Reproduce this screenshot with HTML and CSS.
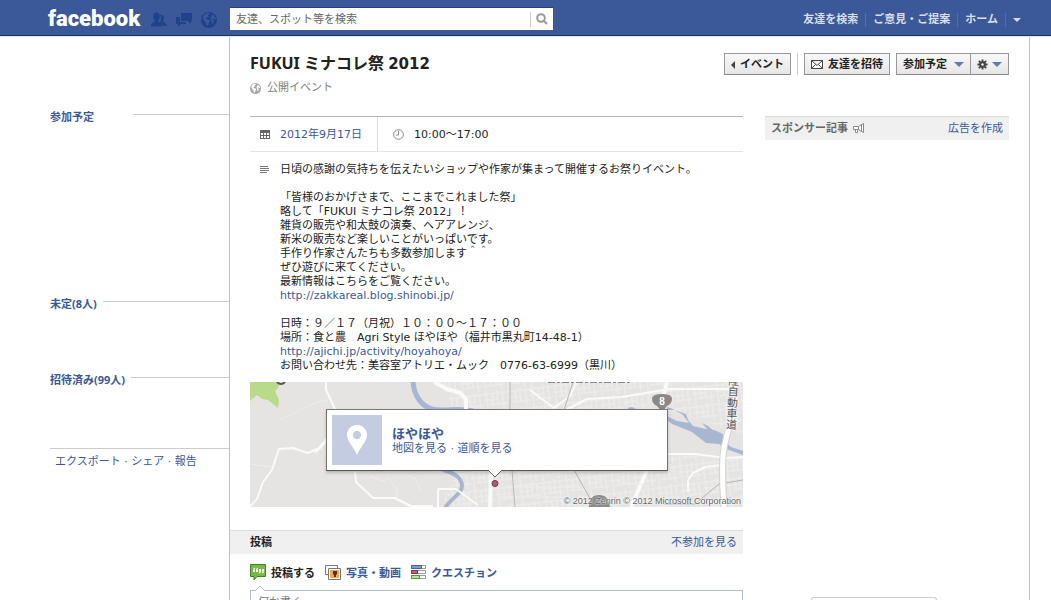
FILE: index.html
```html
<!DOCTYPE html>
<html lang="ja">
<head>
<meta charset="utf-8">
<meta name="viewport" content="width=device-width, initial-scale=1">
<title>FUKUI ミナコレ祭 2012</title>
<link rel="stylesheet" href="styles.css">
</head>
<body>
<header class="topbar">
  <a class="logo" href="#">facebook</a>
  <nav class="jewels" aria-label="通知">
    <button class="jewel" type="button" aria-label="友達リクエスト">
      <svg width="16" height="16" viewBox="0 0 16 16"><path d="M9 3c2-1 4 .3 4 2.600 0 1.500-.5 2.500-1.200 3.400.2 1.500 3.700 1.400 4.200 5h-4.500C11 11.800 9.500 11 9 10.500 10.300 8 10.500 5 9 3z"/><path d="M5.600.6c2 0 3.200 1.500 3.200 3.700C8.800 6 8.100 7.600 7.300 8.500c0 .5 0 1 .3 1.300 1.400.8 3 1.300 3.300 4.700H0c.2-3.400 2-3.900 3.400-4.700.4-.3.400-.8.3-1.300-.8-.9-1.400-2.500-1.400-4.200 0-2.200 1.300-3.700 3.300-3.700z"/></svg>
    </button>
    <button class="jewel" type="button" aria-label="メッセージ">
      <svg width="16" height="16" viewBox="0 0 16 16"><path d="M5 1h11v8h-1v3l-3-3H5z"/><path d="M0 5h4v5h6v2H5l-3 3v-3H0z"/></svg>
    </button>
    <button class="jewel" type="button" aria-label="お知らせ">
      <svg width="16" height="16" viewBox="0 0 16 16"><circle cx="8" cy="8" r="8"/><path class="land" d="M2.500 3.500 5 1.500l3-.5 1 1-2 1 .5 1.500-2 1-.5 1.500 3 1 1 1.500-1.500 2L7 14l-1.500-1-.5-2.500L3.500 9 2 6.500zM11 3l2 .5L15 7l-1 .5-2-1.500-1 1.500 2 1-1 3-1 .5-.5-3L9.500 7z"/></svg>
    </button>
  </nav>
  <form class="search" role="search">
    <input class="search-input" type="text" placeholder="友達、スポット等を検索" aria-label="友達、スポット等を検索">
    <button class="search-button" type="button" aria-label="検索">
      <svg width="12" height="12" viewBox="0 0 12 12"><circle cx="5" cy="5" r="3.800"/><path d="m8 8 3 3"/></svg>
    </button>
  </form>
  <nav class="account" aria-label="アカウント">
    <a href="#">友達を検索</a>
    <a href="#">ご意見・ご提案</a>
    <a href="#">ホーム</a>
    <button class="account-menu" type="button" aria-label="メニュー"><span class="caret"></span></button>
  </nav>
</header>

<div class="page">
  <aside class="guests">
    <section class="guest-group going"><h2><a href="#">参加予定</a></h2></section>
    <section class="guest-group"><h2><a href="#">未定(8人)</a></h2></section>
    <section class="guest-group"><h2><a href="#">招待済み(99人)</a></h2></section>
    <p class="event-links"><a href="#">エクスポート</a> · <a href="#">シェア</a> · <a href="#">報告</a></p>
  </aside>

  <main class="event">
    <div class="event-header">
      <div>
        <h1>FUKUI ミナコレ祭 <span class="year">2012</span></h1>
        <p class="privacy">
          <svg width="11" height="11" viewBox="0 0 16 16"><circle cx="8" cy="8" r="8" fill="#a8a8a8"/><path fill="#fff" d="M2.500 3.500 5 1.500l3-.5 1 1-2 1 .5 1.500-2 1-.5 1.500 3 1 1 1.500-1.500 2L7 14l-1.500-1-.5-2.500L3.500 9 2 6.500zM11 3l2 .5L15 7l-1 .5-2-1.500-1 1.500 2 1-1 3-1 .5-.5-3L9.500 7z"/></svg>
          公開イベント
        </p>
      </div>
      <div class="actions">
        <button class="button" type="button"><span class="back-arrow"></span>イベント</button>
        <span class="actions-divider"></span>
        <button class="button" type="button"><svg width="12" height="9" viewBox="0 0 12 9" fill="#fff" stroke="#444"><path d="M.5.500h11v8H.5zM.5.500 6 5.500l5.500-5M.5 8.500l4-4M11.500 8.500l-4-4"/></svg>友達を招待</button>
        <div class="button-group">
          <button class="button" type="button">参加予定<span class="caret blue"></span></button>
          <button class="button gear" type="button" aria-label="設定"><svg width="11" height="11" viewBox="0 0 12 12" stroke="#444" stroke-width="2"><path d="M6 .5v11M.5 6h11M2 2l8 8M10 2l-8 8"/><circle cx="6" cy="6" r="2.500" fill="#444"/><circle cx="6" cy="6" r="1.300" fill="#fff" stroke="none"/></svg><span class="caret blue"></span></button>
        </div>
      </div>
    </div>

    <div class="columns">
      <div class="details">
        <div class="when">
          <div class="when-item date">
            <svg width="10" height="9" viewBox="0 0 10 9"><path fill="#666" d="M0 0h10v9H0z"/><path fill="#fff" d="M1 3h2v2H1zM4 3h2v2H4zM7 3h2v2H7zM1 6h2v2H1zM4 6h2v2H4zM7 6h2v2H7z"/></svg>
            <a href="#">2012年9月17日</a>
          </div>
          <div class="when-item">
            <svg width="11" height="11" viewBox="0 0 11 11" fill="none" stroke="#888"><circle cx="5.500" cy="5.500" r="4.800"/><path d="M5.500 2v4H3"/></svg>
            <span>10:00〜17:00</span>
          </div>
        </div>
        <div class="about">
          <svg width="9" height="8" viewBox="0 0 9 8" stroke="#777"><path d="M0 .5h8M0 2.500h9M0 4.500h9M0 6.500h7"/></svg>
          <div class="description">
            <p>日頃の感謝の気持ちを伝えたいショップや作家が集まって開催するお祭りイベント。</p>
            <p>「皆様のおかげさまで、ここまでこれました祭」<br>略して「FUKUI ミナコレ祭 2012」！<br>雑貨の販売や和太鼓の演奏、ヘアアレンジ、<br>新米の販売など楽しいことがいっぱいです。<br>手作り作家さんたちも多数参加します＾＾<br>ぜひ遊びに来てください。<br>最新情報はこちらをご覧ください。<br><a href="#">http://zakkareal.blog.shinobi.jp/</a></p>
            <p>日時：９／１７（月祝）１０：００〜１７：００<br>場所：食と農　Agri Style ほやほや（福井市黒丸町14-48-1）<br><a href="#">http://ajichi.jp/activity/hoyahoya/</a><br>お問い合わせ先：美容室アトリエ・ムック　0776-63-6999（黒川）</p>
          </div>
        </div>

        <div class="map">
          <svg class="map-art" viewBox="0 0 493 125" preserveAspectRatio="xMidYMid slice" aria-hidden="true">
            <defs>
              <pattern id="blocks" width="23" height="19" patternUnits="userSpaceOnUse" patternTransform="rotate(-7)">
                <path d="M0 3h23M0 9h14M5 14h18M3 0v19M9 3v11M14 0v14M19 3v16" fill="none" stroke="#f0efee" stroke-width="1"/>
              </pattern>
            </defs>
            <path fill="#e5e4e3" d="M0 0h493v125H0z"/>
            <path fill="url(#blocks)" d="M190 0h303v52l-76-24v44l76 4v49H190l20-40-6-57z"/>
            <path fill="#b9d98b" d="M0 0h30l-2 6-3 3 4 9-1 8-10-8-6-1-5-4-7 6z"/>
            <g fill="none" stroke="#a9b6d2">
              <path stroke-width="5" d="M163 0c1 13 8 24 19 27 12 3 26-2 41 2"/>
              <path stroke-width="4" d="M193 88c9 2 19 7 19 16 0 8-11 12-17 22"/>
            </g>
            <g fill="#a9b6d2">
              <path d="M377 26l5-1 6 3h-8zM417 28h7l12 4 2 6 5 6 13 3 8 1 9 4 2 8 6 5 12 4v4l-14-5-10-6-13-1-14-11-10-4-10-4-5-4v-4l10 5 12 2-6-8-10-6-6-2z"/>
              <path d="M452 41l6 3 7 6-7-2z"/>
            </g>
            <g fill="none" stroke="#fafafa" stroke-width="2" stroke-linejoin="round">
              <path d="M76 0v8l9 19-7 28-9 11-11 5-15-5-14 1-7 21-9 12-6 17-9 10M65 71l13-13M105 90l1 10 17 16h22l17 9"/>
              <path stroke-width="4" d="M184 0l13 7 13 4 6 6v11"/>
              <path d="M145 116l16 8h22M188 107h18l22 16M188 107v18"/>
              <path d="M316 28l21-11 35-2 47-8h60M280 8l24 18 16-12 7-14M417 72l28 0 31 4 17-1M438 98l5-7 12-6 17-2M438 98v12"/>
              <path stroke-width="4" d="M241 90l-1 35M417 0l-8 32M397 88l-16 37"/>
            </g>
            <path fill="none" stroke="#eeeded" d="M28 38c20-6 28-17 50-20M0 82l22 3M120 94l13 5 6-3 8 12v8M157 93l9 4 5 12M250 105h80M250 115h70M280 96l25 29M340 96l60 8"/>
            <path fill="none" stroke="#b7b5b3" d="M260 0v28M323 0l-9 28M262 88l3 37M324 88l18 32M493 98l-24 4-24 20h-30"/>
            <path fill="none" stroke="#d2d1cf" stroke-width="7" d="M485 0c2 23-7 46-11 66-3 18-1 40 0 59"/>
            <path fill="none" stroke="#fff" stroke-width="5" d="M485 0c2 23-7 46-11 66-3 18-1 40 0 59"/>
            <g fill="#8a8987">
              <path d="M402 16q1-4 10-4t10 4q0 6-5 8l-5 6-5-6q-5-2-5-8z"/>
              <path d="M339 125q0-12 10-12t11 12z"/>
            </g>
            <text class="shield-text" x="412" y="23">8</text>
            <text class="road-text" transform="translate(484 -7) rotate(3)">陸自動車道</text>
            <path fill="none" stroke="#555" stroke-width="2" d="M27 0q4 4 8 0"/>
            <path fill="none" stroke="#888" d="M298 .5h82" stroke-dasharray="7 2 3 2"/>
          </svg>
          <div class="place">
            <div class="place-icon">
              <svg width="20" height="30" viewBox="0 0 20 30"><path fill="#fff" fill-rule="evenodd" d="M10 0C4.500 0 0 4.200 0 9.800 0 17 7 22 10 30c3-8 10-13 10-20.200C20 4.200 15.500 0 10 0zm0 6a4 4 0 1 1 0 8 4 4 0 0 1 0-8z"/></svg>
            </div>
            <div>
              <a class="place-name" href="#">ほやほや</a>
              <div><a href="#">地図を見る</a> · <a href="#">道順を見る</a></div>
            </div>
            <svg class="pointer" width="16" height="18" viewBox="0 0 16 18"><path fill="#fff" stroke="#666" d="M1 0l7 7 7-7"/><circle cx="8" cy="13.500" r="3" fill="#ad5d76" stroke="#74314a"/></svg>
          </div>
          <small class="map-credit">© 2012 Zenrin © 2012 Microsoft Corporation</small>
        </div>

        <div class="posts-header"><h2>投稿</h2><a href="#">不参加を見る</a></div>
        <div class="composer-tabs">
          <button class="tab selected" type="button">
            <svg width="16" height="17" viewBox="0 0 16 17"><path fill="#76b944" stroke="#3f8624" d="M.5.500h15v12H7l-3 3.500v-3.500H.5z"/><path fill="#fff" d="M3 6q0-2 2-2.500V5q-.6.2-.6 1H5v2H3zM6 6q0-2 2-2.500V5q-.6.2-.6 1H8v2H6zM9 5h2v2q0 2-2 2.500V8q.6-.2.6-1H9zM12 5h2v2q0 2-2 2.500V8q.6-.2.6-1H12z"/></svg><span>投稿する</span>
          </button>
          <button class="tab" type="button">
            <svg width="16" height="15" viewBox="0 0 16 15"><path fill="#fff" stroke="#667799" d="M.5.500h12v9H.5z"/><path fill="#fff" stroke="#777" d="M3.500 3.500h12v11h-12z"/><path fill="#f3a94c" d="M5 5h9v8H5z"/><path fill="#533019" d="M8 6h4v3l-1 1v2H9v-2L8 9z"/></svg><span>写真・動画</span>
          </button>
          <button class="tab" type="button">
            <svg width="15" height="15" viewBox="0 0 15 15"><path fill="#fff" stroke="#999" d="M.5.500h14v3H.5zM.5 5.500h14v3H.5zM.5 10.500h14v3H.5z"/><path fill="#7b9bdc" stroke="#47609a" d="M.5.500h10v3H.5z"/><path fill="#c66078" stroke="#793548" d="M.5 5.500h6v3h-6z"/><path fill="#b9e49a" stroke="#539538" d="M.5 10.500h8v3h-8z"/></svg><span>クエスチョン</span>
          </button>
        </div>
        <div class="composer">
          <svg class="composer-nub" width="12" height="6" viewBox="0 0 12 6"><path fill="#fff" stroke="#b4bbcd" d="M1 6l5-5 5 5"/></svg>
          <textarea class="composer-input" placeholder="何か書く..." aria-label="何か書く"></textarea>
        </div>
      </div>

      <aside class="sponsored">
        <div class="sponsored-header">
          <h2>スポンサー記事
            <svg width="12" height="11" viewBox="0 0 12 11" fill="#fff" stroke="#888"><path d="M.5 3.500h5l3-2v7l-3-2h-5zM2.500 6.500v3h2v-3M5.500 3.500v3M8.500 1.500l2-1v9l-2-1z"/></svg>
          </h2>
          <a href="#">広告を作成</a>
        </div>
      </aside>
    </div>
  </main>
</div>
<div class="chat-tab"></div>
</body>
</html>
```
FILE: styles.css
```css
* {
  box-sizing: border-box;
}

body {
  margin: 0;
  height: 100vh;
  overflow: hidden;
  background: #fff;
  color: #222;
  font: 11px/14px "DejaVu Sans", "Noto Sans CJK JP", sans-serif;
}

h1, h2, p {
  margin: 0;
}

h2 {
  font-size: 11px;
}

a {
  color: #3b5998;
  text-decoration: none;
}

button, input, textarea {
  margin: 0;
  font: inherit;
}

button {
  cursor: pointer;
}

svg {
  display: block;
  flex: none;
}

/* Top bar */
.topbar {
  display: flex;
  align-items: center;
  height: 36px;
  padding: 0 28px 0 48px;
  background: #3b5998;
  border-bottom: 1px solid #1d3469;
  box-shadow: 0 1px 0 #dde2ef;
}

.logo {
  width: 103px;
  padding-top: 3px;
  color: #fff;
  font: 900 22px/24px Roboto, sans-serif;
}

.jewels {
  display: flex;
  gap: 9px;
  width: 79px;
  padding-top: 4px;
}

.jewel {
  padding: 0;
  border: 0;
  background: none;
  fill: #20428a;
}

.land {
  fill: #3b5998;
}

.search {
  display: flex;
  align-items: center;
  flex: 0 1 323px;
  height: 22px;
  margin-top: 3px;
  background: #fff;
  box-shadow: 0 -1px 0 #263f76;
}

.search-input {
  flex: 1;
  min-width: 0;
  height: 22px;
  padding: 1px 6px 0;
  border: 0;
  background: none;
}

.search-input::placeholder {
  color: #666;
  opacity: 1;
}

.search-button {
  padding: 1px 5px 2px;
  border: 0;
  border-left: 1px solid #ccc;
  background: none;
  fill: none;
  stroke: #999;
  stroke-width: 2;
}

.account {
  display: flex;
  align-items: center;
  margin-left: auto;
  padding-top: 4px;
  font-weight: bold;
}

.account a {
  padding: 0 7px;
  border-right: 1px solid #5570a7;
  color: #d8dfea;
  white-space: nowrap;
}

.account-menu {
  padding: 0 2px 0 7px;
  border: 0;
  background: none;
}

.caret {
  display: block;
  border: 4px solid transparent;
  border-top-color: #d8dfea;
  border-bottom: 0;
}

.caret.blue {
  border-width: 5px;
  border-top-color: #627aad;
  border-bottom: 0;
}

/* Page frame */
.page {
  display: grid;
  grid-template-columns: 179px minmax(0, 1fr);
  min-height: 100%;
  padding: 1px 21px 0 50px;
}

.guests {
  padding-top: 72px;
}

.guest-group {
  min-height: 76px;
}

.guest-group.going {
  min-height: 187px;
}

.guest-group h2 {
  display: flex;
  gap: 6px;
  font-family: "Noto Sans", "Noto Sans CJK JP", sans-serif;
}

.guest-group h2::after {
  content: "";
  flex: 1;
  height: 1px;
  margin-top: 5px;
  background: #ccc;
}

.guest-group a {
  padding-top: 1px;
}

.going h2 a {
  width: 77px;
}

.event-links {
  padding: 6px 5px;
  border-top: 1px solid #ccc;
  color: #666;
}

.event {
  padding: 16px 20px 0;
  border: solid #bfc0c4;
  border-width: 0 1px;
}

.event-header {
  display: flex;
  justify-content: space-between;
  height: 63px;
}

h1 {
  font: bold 16px/20px "Noto Sans", "Noto Sans CJK JP", sans-serif;
}

.year {
  font-family: "DejaVu Sans", sans-serif;
  font-size: 15px;
}

.privacy {
  display: flex;
  align-items: center;
  gap: 6px;
  margin-top: 7px;
  color: #808080;
}

.actions, .button-group {
  display: flex;
  align-items: flex-start;
}

.actions {
  gap: 6px;
}

.actions-divider {
  width: 1px;
  height: 22px;
  background: #ccc;
}

.button {
  display: flex;
  align-items: center;
  gap: 5px;
  height: 22px;
  padding: 1px 6px 0;
  border: 1px solid #999;
  border-bottom-color: #888;
  background: linear-gradient(#f8f8f8, #e6e6e6);
  color: #222;
  font-weight: bold;
  white-space: nowrap;
}

.button-group .button {
  gap: 7px;
}

.button-group .gear {
  gap: 4px;
  margin-left: -1px;
}

.back-arrow {
  border: 4px solid transparent;
  border-right-color: #444;
  border-left: 0;
}

.columns {
  display: grid;
  grid-template-columns: minmax(0, 1fr) 244px;
  gap: 22px;
}

/* Event details */
.when {
  display: flex;
  border-top: 1px solid #b5b5b5;
  border-bottom: 1px solid #e4e4e4;
}

.when-item {
  display: flex;
  align-items: center;
  gap: 10px;
  height: 34px;
  padding: 0 15px;
}

.when-item a, .when-item span {
  padding-top: 2px;
}

.date {
  min-width: 128px;
  padding: 0 10px;
  border-right: 1px solid #ddd;
}

.about {
  display: flex;
  gap: 11px;
  padding: 11px 0 9px 10px;
}

.about > svg {
  margin-top: 3px;
}

.description {
  display: grid;
  gap: 14px;
}

.map {
  position: relative;
  height: 125px;
  overflow: hidden;
}

.map-art {
  width: 100%;
  height: 100%;
}

.shield-text {
  fill: #fff;
  font: bold 10px "Liberation Sans", sans-serif;
  text-anchor: middle;
}

.road-text {
  fill: #555;
  stroke: #f5f5f5;
  stroke-width: 2px;
  paint-order: stroke;
  font: 11px "Noto Sans CJK JP", sans-serif;
  writing-mode: vertical-rl;
}

.place {
  position: absolute;
  top: 27px;
  left: 76px;
  right: 75px;
  display: flex;
  gap: 10px;
  height: 62px;
  padding: 5px;
  border: 1px solid #777;
  border-bottom-color: #555;
  background: #fff;
  box-shadow: 0 2px 3px rgba(0, 0, 0, 0.2);
  color: #666;
}

.place-icon {
  display: grid;
  place-items: center;
  width: 50px;
  height: 50px;
  background: #c3cce1;
}

.place-name {
  display: block;
  padding-top: 11px;
  font-size: 13px;
  font-weight: bold;
  line-height: 16px;
}

.pointer {
  position: absolute;
  top: 60px;
  left: calc(50% - 10px);
}

.map-credit {
  position: absolute;
  right: 2px;
  bottom: 0;
  color: #666;
  font: 9px/12px "Liberation Sans", sans-serif;
  text-shadow: 0 0 2px #fff, 0 0 2px #fff;
}

/* Posts */
.posts-header, .sponsored-header {
  display: flex;
  justify-content: space-between;
  align-items: center;
  height: 24px;
  padding: 0 6px;
  border-top: 1px solid #ddd;
  background: #f0f0f0;
}

.posts-header {
  margin: 23px 0 0 -20px;
  padding-left: 20px;
}

.composer-tabs {
  display: flex;
  gap: 10px;
  height: 36px;
}

.tab {
  display: flex;
  align-items: center;
  gap: 5px;
  padding: 0;
  border: 0;
  background: none;
  color: #3b5998;
  font-weight: bold;
}

.tab span {
  padding-top: 3px;
}

.tab.selected {
  color: #222;
}

.composer {
  position: relative;
  border: 1px solid #b4bbcd;
}

.composer-nub {
  position: absolute;
  top: -6px;
  left: 3px;
}

.composer-input {
  display: block;
  width: 100%;
  height: 48px;
  padding: 5px 7px;
  border: 0;
  resize: none;
}

.composer-input::placeholder {
  color: #777;
  opacity: 1;
}

.sponsored-header h2 {
  display: flex;
  align-items: center;
  gap: 5px;
  color: #666;
}

.chat-tab {
  position: fixed;
  right: 114px;
  bottom: 0;
  width: 126px;
  height: 3px;
  border: 1px solid #ccc;
  border-bottom: 0;
  border-radius: 3px 3px 0 0;
  background: #fff;
}
```
